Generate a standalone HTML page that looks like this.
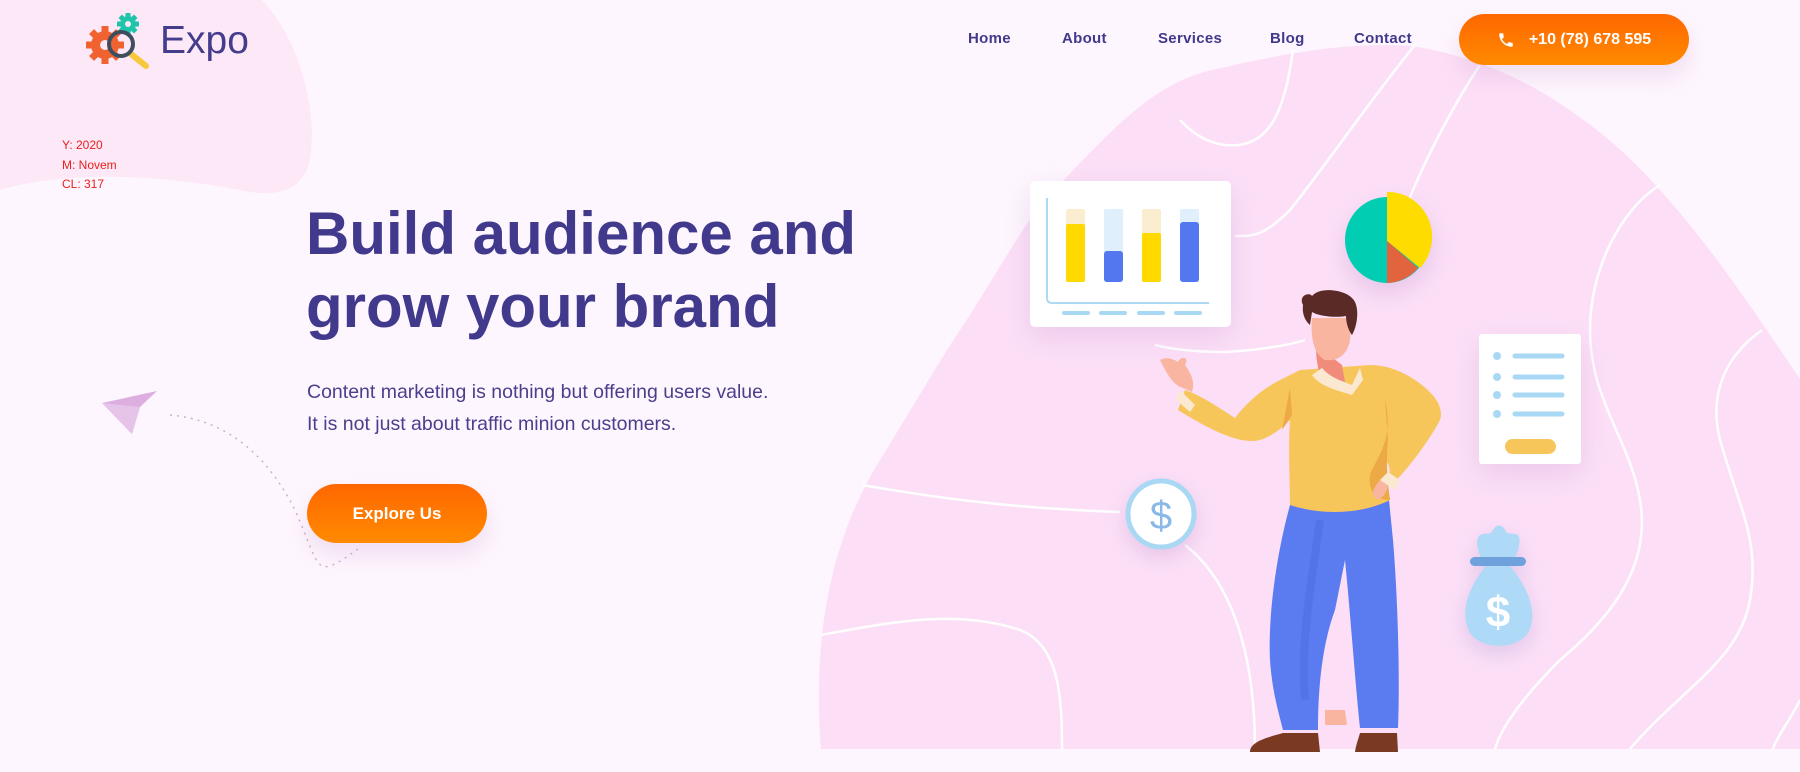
<!DOCTYPE html>
<html><head><meta charset="utf-8"><style>
*{margin:0;padding:0;box-sizing:border-box}
body{width:1800px;height:772px;overflow:hidden;background:#fef6fe;font-family:"Liberation Sans",sans-serif;position:relative}
.abs{position:absolute}
.nav a{position:absolute;top:30px;font-size:15px;font-weight:bold;color:#41398b;text-decoration:none;letter-spacing:0.3px}
h1{position:absolute;left:306px;top:197px;font-size:60px;line-height:73px;font-weight:bold;color:#41398b;letter-spacing:0px;white-space:nowrap}
p.t{position:absolute;left:307px;top:376px;font-size:19.5px;line-height:32px;color:#4a3f8c;white-space:nowrap}
.btn{position:absolute;background:linear-gradient(#ff6700,#ff8a00);border-radius:32px;color:#fff;font-weight:bold;display:flex;align-items:center;justify-content:center;box-shadow:0 12px 22px rgba(200,150,200,0.25)}
.red{position:absolute;left:62px;font-size:12px;color:#e8201c;line-height:19.5px;top:136px}
</style></head><body>
<svg class="abs" style="left:0;top:0" width="1800" height="772" viewBox="0 0 1800 772">
<path d="M0 0 H262 C300 40 318 110 310 160 C302 195 270 197 240 190 C160 175 70 170 0 190 Z" fill="#fde8f8"/>
<path d="M821 749 C812 640 830 540 880 460 C920 395 940 360 960 330 C1000 270 1030 210 1060 184 C1120 120 1160 80 1217 69 C1290 52 1350 42 1412 46 C1500 60 1560 100 1607 138 C1680 200 1740 290 1800 379 V749 Z" fill="#fcdff7"/>
<g fill="none" stroke="#fff" stroke-width="2.5" opacity="0.95">
<path d="M1293 50 C1285 110 1270 150 1225 145 C1200 142 1185 125 1180 120"/>
<path d="M1415 45 C1370 100 1330 160 1290 210 C1260 240 1250 235 1235 236"/>
<path d="M1480 65 C1450 110 1420 170 1405 210"/>
<path d="M1660 185 C1620 210 1590 270 1590 330 C1590 400 1630 440 1640 500 C1650 560 1620 610 1560 660 C1520 700 1500 730 1495 749"/>
<path d="M1762 330 C1720 360 1710 400 1720 440 C1740 510 1760 540 1750 600 C1740 660 1680 690 1630 749"/>
<path d="M1800 700 C1790 720 1775 740 1773 749"/>
<path d="M1155 345 C1175 350 1200 352 1225 352 C1260 350 1290 345 1305 340"/>
<path d="M862 485 C920 495 1000 508 1120 512"/>
<path d="M1185 545 C1230 580 1255 650 1255 749"/>
<path d="M821 635 C900 620 960 610 1020 630 C1060 645 1062 700 1062 749"/>
</g>
<path d="M102 403 L157 391 L140 407 L132 434 Z" fill="#ddaee0"/>
<path d="M102 403 L140 407 L132 434" fill="#e6c3e8"/>
<path d="M170 415 C230 420 270 460 295 510 C315 555 315 570 330 566 C345 560 355 550 360 548" fill="none" stroke="#c9b3cf" stroke-width="1.5" stroke-dasharray="2 5"/>
<!-- logo -->
<g transform="translate(105,45)"><circle r="14" fill="#f0622f"/><g fill="#f0622f"><rect x="-3.5" y="-19" width="7" height="38"/><rect x="-19" y="-3.5" width="38" height="7"/><rect x="-3.5" y="-19" width="7" height="38" transform="rotate(45)"/><rect x="-3.5" y="-19" width="7" height="38" transform="rotate(-45)"/></g><circle r="5" fill="#fde8f8"/></g>
<g transform="translate(128,24)"><circle r="8" fill="#20c4aa"/><g fill="#20c4aa"><rect x="-2.5" y="-11" width="5" height="22"/><rect x="-11" y="-2.5" width="22" height="5"/><rect x="-2.5" y="-11" width="5" height="22" transform="rotate(45)"/><rect x="-2.5" y="-11" width="5" height="22" transform="rotate(-45)"/></g><circle r="3" fill="#fde8f8"/></g>
<line x1="131" y1="54" x2="146" y2="66" stroke="#f7c83a" stroke-width="6" stroke-linecap="round"/>
<circle cx="121" cy="44" r="12" fill="none" stroke="#3d4f5f" stroke-width="4"/>
<!-- chart card -->
<rect x="1030" y="181" width="201" height="146" rx="5" fill="#fff" filter="drop-shadow(0 10px 14px rgba(180,140,200,.25))"/>
<path d="M1047 198 V298 Q1047 303 1052 303 H1209" fill="none" stroke="#aed9f5" stroke-width="2"/>
<rect x="1066" y="209" width="19" height="73" rx="2" fill="#fbeed0"/><rect x="1066" y="224" width="19" height="58" rx="2" fill="#ffd900"/>
<rect x="1104" y="209" width="19" height="73" rx="2" fill="#dff0fc"/><rect x="1104" y="251" width="19" height="31" rx="3" fill="#5377ee"/>
<rect x="1142" y="209" width="19" height="73" rx="2" fill="#fbeed0"/><rect x="1142" y="233" width="19" height="49" rx="2" fill="#ffd900"/>
<rect x="1180" y="209" width="19" height="73" rx="2" fill="#dff0fc"/><rect x="1180" y="222" width="19" height="60" rx="3" fill="#5377ee"/>
<g stroke="#a9d8f4" stroke-width="4" stroke-linecap="round"><line x1="1064" y1="313" x2="1088" y2="313"/><line x1="1101" y1="313" x2="1125" y2="313"/><line x1="1139" y1="313" x2="1163" y2="313"/><line x1="1176" y1="313" x2="1200" y2="313"/></g>
<!-- pie -->
<g filter="drop-shadow(0 10px 12px rgba(180,140,200,.3))">
<ellipse cx="1387" cy="240" rx="42" ry="43" fill="#00cdb2"/>
<path d="M1387 192 A44 45 0 0 1 1420 268 L1387 241 Z" fill="#ffdc00"/>
<path d="M1387 241 L1418 268 A42 43 0 0 1 1387 283 Z" fill="#e2643e"/></g>
<!-- list card -->
<rect x="1479" y="334" width="102" height="130" rx="3" fill="#fff" filter="drop-shadow(0 10px 14px rgba(180,140,200,.25))"/>
<g fill="#a9d8f4"><circle cx="1497" cy="356" r="4"/><circle cx="1497" cy="377" r="4"/><circle cx="1497" cy="395" r="4"/><circle cx="1497" cy="414" r="4"/></g>
<g stroke="#a9d8f4" stroke-width="5" stroke-linecap="round"><line x1="1515" y1="356" x2="1562" y2="356"/><line x1="1515" y1="377" x2="1562" y2="377"/><line x1="1515" y1="395" x2="1562" y2="395"/><line x1="1515" y1="414" x2="1562" y2="414"/></g>
<rect x="1505" y="439" width="51" height="15" rx="7.5" fill="#f6c65b"/>
<!-- coin -->
<circle cx="1161" cy="514" r="33" fill="#fff" stroke="#a9d8f4" stroke-width="5" filter="drop-shadow(0 8px 10px rgba(180,140,200,.3))"/>
<text x="1161" y="529" font-size="40" text-anchor="middle" fill="#8ab8e8" font-family="Liberation Sans">$</text>
<!-- money bag -->
<g filter="drop-shadow(0 8px 10px rgba(160,150,210,.3))">
<path d="M1486 566 C1478 555 1474 540 1480 535 C1486 532 1490 536 1493 530 C1496 524 1502 524 1505 530 C1508 536 1512 532 1518 535 C1522 540 1518 555 1510 566 C1530 590 1538 615 1528 633 C1516 650 1482 650 1470 633 C1460 615 1466 590 1486 566 Z" fill="#aed9f7"/>
<rect x="1470" y="557" width="56" height="9" rx="4.5" fill="#6fa2dc"/></g>
<text x="1498" y="627" font-size="44" text-anchor="middle" fill="#fff" font-weight="bold" font-family="Liberation Sans">$</text>
<!-- person -->
<path d="M1290 505 C1275 560 1268 620 1270 660 C1272 690 1278 710 1283 730 L1318 730 C1318 700 1320 650 1335 610 L1345 560 C1350 610 1355 680 1360 728 L1398 728 C1400 680 1398 600 1393 540 L1389 500 Z" fill="#5b7cf0"/>
<path d="M1320 520 C1312 580 1300 640 1305 700" fill="none" stroke="#4a6be0" stroke-width="8" opacity="0.5"/>
<path d="M1325 710 H1345 L1347 725 H1325 Z" fill="#f9b5a0"/>
<path d="M1250 752 C1250 742 1265 738 1283 733 L1318 733 L1320 752 Z" fill="#7a3a22"/>
<path d="M1360 733 L1397 733 L1398 752 L1355 752 C1356 745 1358 740 1360 733 Z" fill="#7a3a22"/>
<path d="M1280 380 C1260 390 1245 405 1235 418 C1215 405 1200 395 1185 390 L1178 410 C1210 430 1240 445 1260 440 C1275 435 1285 425 1290 420 C1288 450 1290 480 1290 505 C1320 515 1360 515 1390 500 C1388 485 1385 470 1385 460 C1395 470 1385 480 1390 485 C1400 480 1430 440 1440 420 C1445 405 1430 390 1415 380 C1400 370 1385 365 1370 365 L1300 370 Z" fill="#f6c65b"/>
<path d="M1385 400 C1395 440 1375 460 1370 475 C1368 490 1375 500 1390 500 C1387 480 1386 460 1388 440 Z" fill="#eda945"/>
<path d="M1290 388 L1282 430 L1292 415 Z" fill="#eda945"/>
<path d="M1183 388 C1172 385 1165 370 1160 360 C1165 357 1172 358 1178 362 C1180 356 1190 356 1185 365 C1192 375 1195 382 1192 392 Z" fill="#f9b5a0"/>
<path d="M1180 390 L1195 405 L1190 412 L1176 400 Z" fill="#fbe8d0"/>
<path d="M1380 480 C1372 490 1370 495 1378 500 C1385 496 1388 490 1388 482 Z" fill="#f9b5a0"/>
<path d="M1380 480 L1395 490 L1400 480 L1388 472 Z" fill="#fbe8d0"/>
<path d="M1316 345 C1316 360 1318 372 1322 378 L1345 382 L1342 365 Z" fill="#f28c7a"/>
<path d="M1312 318 C1310 340 1315 355 1325 360 C1340 362 1348 352 1350 340 L1352 318 Z" fill="#f9b5a0"/>
<path d="M1303 305 C1298 295 1310 292 1312 296 C1320 286 1345 290 1352 298 C1360 305 1358 325 1352 335 C1348 330 1346 322 1346 316 C1335 318 1318 316 1312 312 L1310 325 C1304 320 1302 312 1303 305 Z" fill="#5a2a27"/>
<path d="M1312 375 L1322 368 C1330 378 1345 382 1352 385 L1360 368 L1363 380 L1352 395 C1335 390 1318 385 1312 375 Z" fill="#fbe8d0"/>
</svg>
<div class="abs" style="left:160px;top:19px;font-size:39px;color:#433d8b">Expo</div>
<div class="red">Y: 2020<br>M: Novem<br>CL: 317</div>
<div class="nav"><a style="left:968px">Home</a><a style="left:1062px">About</a><a style="left:1158px">Services</a><a style="left:1270px">Blog</a><a style="left:1354px">Contact</a></div>
<div class="btn" style="left:1459px;top:14px;width:230px;height:51px;font-size:16px"><svg width="18" height="18" viewBox="0 0 24 24" style="margin-right:14px"><path fill="#fff" d="M6.6 10.8c1.4 2.8 3.8 5.1 6.6 6.6l2.2-2.2c.3-.3.7-.4 1-.2 1.1.4 2.300.6 3.6.6.6 0 1 .4 1 1V20c0 .6-.4 1-1 1C10.6 21 3 13.4 3 4c0-.6.4-1 1-1h3.5c.6 0 1 .4 1 1 0 1.3.2 2.5.6 3.6.1.3 0 .7-.2 1z"/></svg>+10 (78) 678 595</div>
<h1>Build audience and<br>grow your brand</h1>
<p class="t">Content marketing is nothing but offering users value.<br>It is not just about traffic minion customers.</p>
<div class="btn" style="left:307px;top:484px;width:180px;height:59px;font-size:17px">Explore Us</div>
</body></html>
